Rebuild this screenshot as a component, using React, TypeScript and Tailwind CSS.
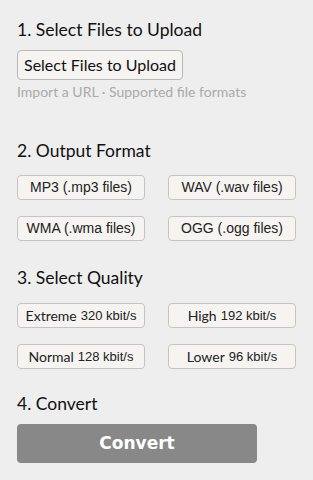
import React from "react";

const formats = [
  "MP3 (.mp3 files)",
  "WAV (.wav files)",
  "WMA (.wma files)",
  "OGG (.ogg files)",
];

const qualities = [
  { name: "Extreme", rate: "320 kbit/s" },
  { name: "High", rate: "192 kbit/s" },
  { name: "Normal", rate: "128 kbit/s" },
  { name: "Lower", rate: "96 kbit/s" },
];

function Heading({ children }: { children: React.ReactNode }) {
  return (
    <h2 className="text-[17.5px] leading-5 text-[#111] font-['Lato',sans-serif]">
      {children}
    </h2>
  );
}

const optionClass =
  "h-[25px] w-[128px] rounded-[4px] border border-[#c4c4c4] bg-[#f6f4f1] text-[#222] font-['Liberation_Sans',sans-serif] flex items-center justify-center";

function App() {
  return (
    <div className="w-[313px] h-[480px] bg-[#eeeeee] px-[17px] pt-[20px] font-['Lato',sans-serif]">
      <Heading>1. Select Files to Upload</Heading>
      <button className="mt-[10px] h-[30px] px-[6px] rounded-[4px] border border-[#b8b8b8] bg-[#f6f4f1] text-[16px] text-[#111] font-['Lato',sans-serif]">
        Select Files to Upload
      </button>
      <p className="mt-[4px] text-[14px] leading-4 text-[#aaaaaa]">
        Import a URL · Supported file formats
      </p>

      <div className="mt-[41px]">
        <Heading>2. Output Format</Heading>
      </div>
      <div className="mt-[14px] grid grid-cols-[128px_128px] gap-x-[23px] gap-y-[16px]">
        {formats.map((f) => (
          <button key={f} className={`${optionClass} text-[14px]`}>
            {f}
          </button>
        ))}
      </div>

      <div className="mt-[27px]">
        <Heading>3. Select Quality</Heading>
      </div>
      <div className="mt-[15px] grid grid-cols-[128px_128px] gap-x-[23px] gap-y-[16px]">
        {qualities.map((q) => (
          <button key={q.name} className={`${optionClass} text-[13px]`}>
            <span className="text-[14px] font-['Lato',sans-serif] mr-[4px]">
              {q.name}
            </span>
            {q.rate}
          </button>
        ))}
      </div>

      <div className="mt-[25px]">
        <Heading>4. Convert</Heading>
      </div>
      <button className="mt-[10px] h-[39px] w-[240px] rounded-[4px] bg-[#888888] text-white text-[17px] font-bold font-['DejaVu_Sans',sans-serif]">
        Convert
      </button>
    </div>
  );
}

export default App;
